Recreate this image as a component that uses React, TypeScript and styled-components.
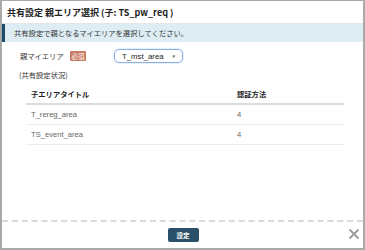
import styled, { createGlobalStyle } from 'styled-components';

const GlobalStyle = createGlobalStyle`
html, body {
	margin: 0;
	padding: 0;
	background: #ffffff;
}
body {
	font-family: "Noto Sans CJK JP", "Liberation Sans", sans-serif;
	color: #333;
}
`;

const Modal = styled.div`
box-sizing: border-box;
width: 365px;
height: 250px;
border: 2px solid #a9a9a9;
border-top-width: 1px;
display: flex;
flex-direction: column;
background: #fff;
`;

const Header = styled.div`
height: 22px;
padding-left: 5px;
display: flex;
align-items: center;
font-size: 9px;
font-weight: bold;
color: #222;
border-bottom: 1px solid #e6e6e6;
white-space: nowrap;
`;

const Body = styled.div`
flex: 1;
display: flex;
flex-direction: column;
`;

const Banner = styled.div`
height: 18px;
display: flex;
align-items: center;
padding-left: 9px;
background: #deedf3;
border-left: 3px solid #1f4a66;
font-size: 7.3px;
color: #333;
white-space: nowrap;
`;

const FormRow = styled.div`
display: flex;
align-items: center;
margin-top: 7px;
padding-left: 18px;
height: 14px;
`;

const Label = styled.span`
font-size: 7.3px;
color: #333;
width: 50px;
white-space: nowrap;
`;

const Badge = styled.span`
background: #c87b62;
color: #fff;
font-size: 6.5px;
width: 16px;
text-align: center;
height: 10px;
line-height: 10px;
border-radius: 1px;
margin-right: 28px;
`;

const SelectBox = styled.div`
box-sizing: border-box;
width: 69px;
height: 14px;
border: 1px solid #8eaee0;
box-shadow: 0 0 2px #a9c4ee;
border-radius: 5px;
display: flex;
align-items: center;
justify-content: space-between;
padding: 0 6px 0 7px;
font-family: "Liberation Sans", sans-serif;
font-size: 7.8px;
color: #222;
`;

const Caret = styled.span`
font-size: 4.5px;
color: #555;
`;

const Note = styled.div`
padding: 7px 0 0 17px;
font-size: 7.3px;
line-height: 11px;
color: #333;
`;

const Table = styled.table`
margin: 6px 0 0 24px;
width: 318px;
border-collapse: collapse;
font-size: 7.3px;
line-height: 11px;
`;

const Th = styled.th<{ $w?: number }>`
text-align: left;
font-weight: bold;
padding: 2px 0 3px 5px;
width: ${p => (p.$w ? `${p.$w}px` : 'auto')};
border-bottom: 2px solid #dcdcdc;
color: #222;
`;

const Td = styled.td`
font-family: "Liberation Sans", sans-serif;
font-size: 7.6px;
padding: 4px 0 4px 5px;
color: #666;
border-bottom: 1px solid #ececec;
`;

const Footer = styled.div`
height: 26px;
border-top: 2px dashed #dadada;
display: flex;
align-items: center;
justify-content: center;
position: relative;
`;

const SubmitButton = styled.button`
width: 31px;
height: 14px;
padding: 0;
border: 0;
border-radius: 2px;
background: #2b5069;
color: #fff;
font-family: "Noto Sans CJK JP", sans-serif;
font-size: 6.5px;
font-weight: bold;
margin-left: 1px;
`;

const Close = styled.span`
position: absolute;
right: 3px;
top: 6px;
width: 12px;
height: 12px;
display: flex;
`;

const rows = [
	{ title: 'T_rereg_area', auth: '4' },
	{ title: 'TS_event_area', auth: '4' },
];

const App = () => {
	return (
		<>
			<GlobalStyle />
			<Modal>
				<Header>共有設定 親エリア選択 (子: TS_pw_req )</Header>
				<Body>
					<Banner>共有設定で親となるマイエリアを選択してください。</Banner>
					<FormRow>
						<Label>親マイエリア</Label>
						<Badge>必須</Badge>
						<SelectBox>
							T_mst_area
							<Caret>▼</Caret>
						</SelectBox>
					</FormRow>
					<Note>(共有設定状況)</Note>
					<Table>
						<thead>
							<tr>
								<Th $w={201}>子エリアタイトル</Th>
								<Th>認証方法</Th>
							</tr>
						</thead>
						<tbody>
							{rows.map(r => (
								<tr key={r.title}>
									<Td>{r.title}</Td>
									<Td>{r.auth}</Td>
								</tr>
							))}
						</tbody>
					</Table>
				</Body>
				<Footer>
					<SubmitButton type='button'>設定</SubmitButton>
					<Close>
						<svg width='12' height='12' viewBox='0 0 12 12'>
							<path d='M1.5 1.5 L10.5 10.5 M10.5 1.5 L1.5 10.5' stroke='#9a9a9a' strokeWidth='1.8' />
						</svg>
					</Close>
				</Footer>
			</Modal>
		</>
	)
}

export default App
